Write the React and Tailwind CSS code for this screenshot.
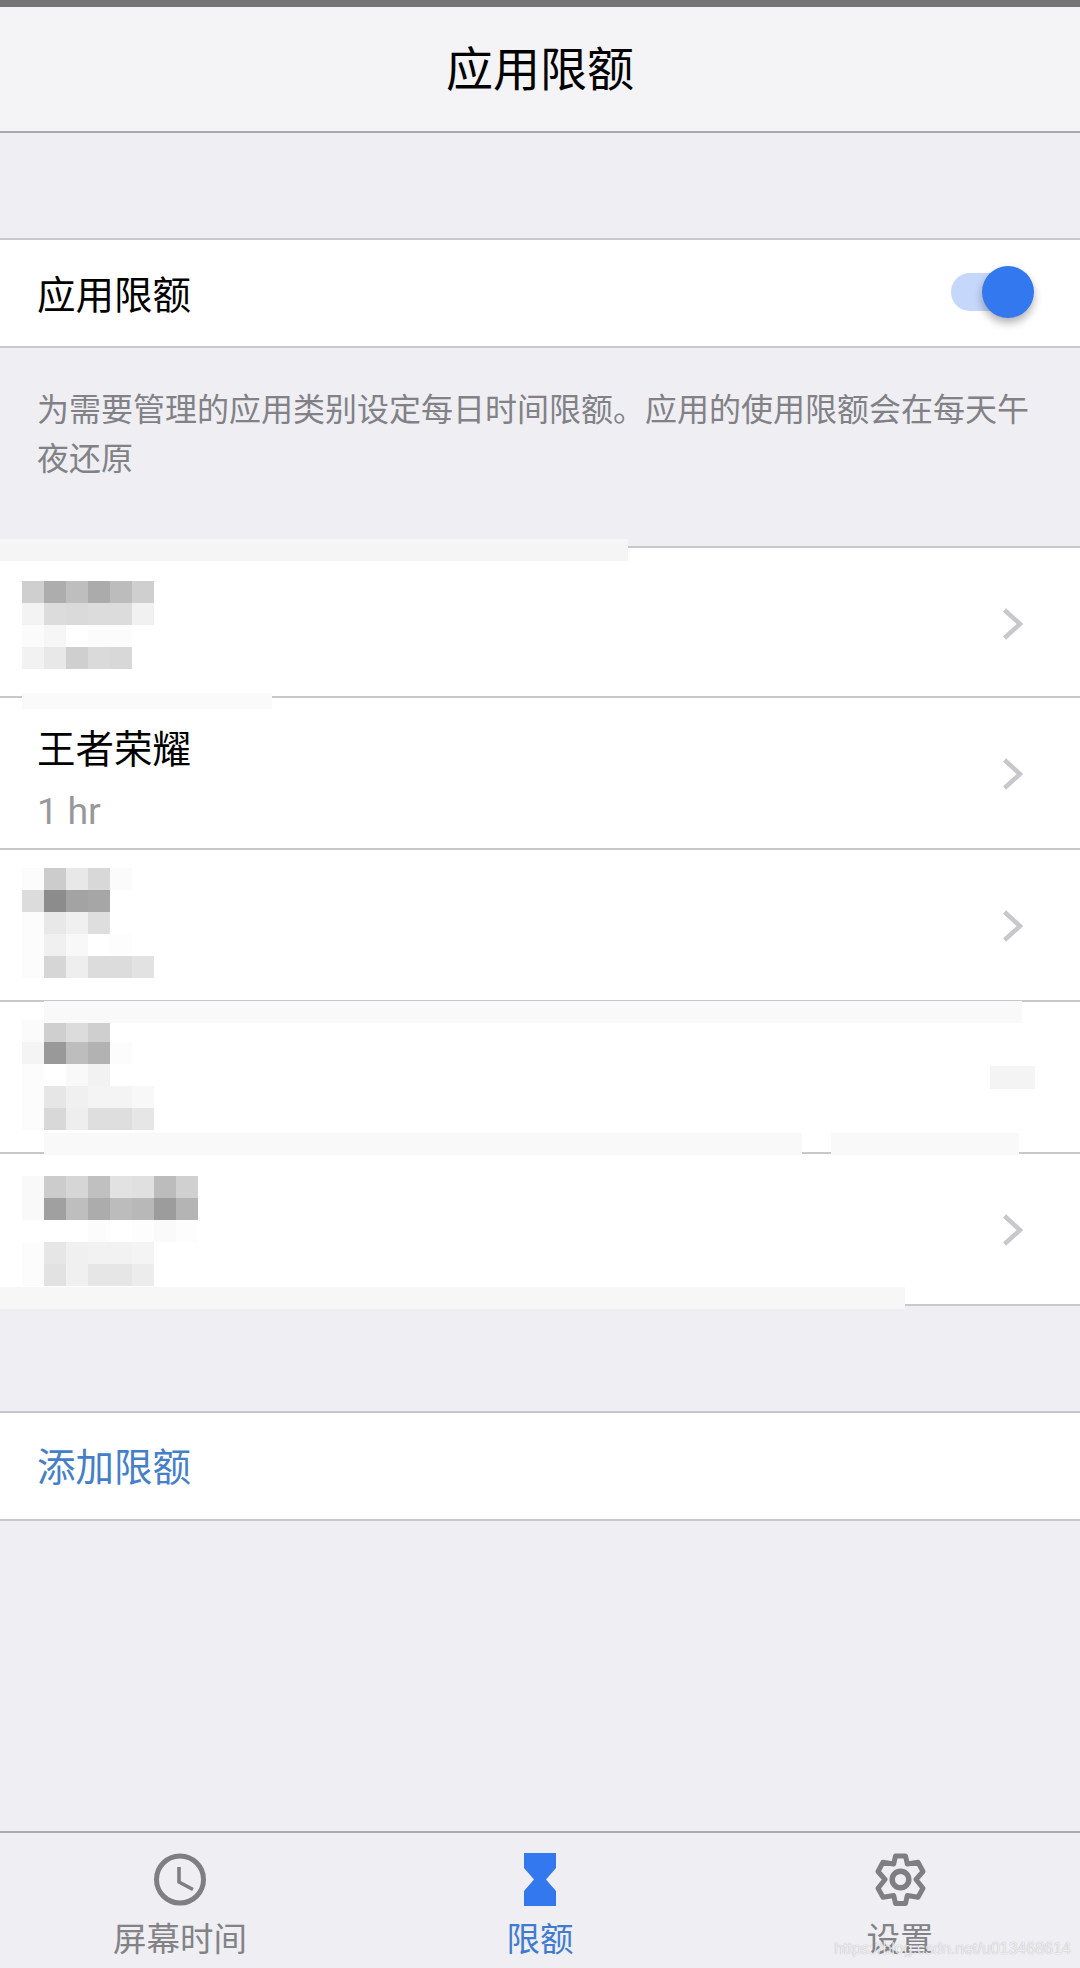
const cjk = "font-['Noto_Sans_CJK_SC','Liberation_Sans',sans-serif]";

const Mosaic = ({ cells }) => (
  <div className="flex flex-col">
    {cells.map((line, i) => (
      <div key={i} className="flex h-[22px]">
        {line.map((c, j) => (
          <div key={j} className={`h-[22px] w-[22px] ${c}`} />
        ))}
      </div>
    ))}
  </div>
);

const Chevron = () => (
  <svg width="20" height="32" viewBox="0 0 20 32" className="shrink-0">
    <path d="M1.5 2 L17 16 L1.5 30" fill="none" stroke="#c7c7cc" strokeWidth="4.5" />
  </svg>
);

const ClockIcon = () => (
  <svg width="52" height="53" viewBox="0 0 52 53">
    <circle cx="26" cy="26.5" r="23.5" fill="none" stroke="#7f7f83" strokeWidth="5" />
    <path d="M25 14 V29 L39 36.5" fill="none" stroke="#7f7f83" strokeWidth="3.6" />
  </svg>
);

const HourglassIcon = () => (
  <svg width="32" height="53" viewBox="0 0 32 53">
    <path d="M0 0 H32 V15 L22 26.5 L32 38 V53 H0 V38 L10 26.5 L0 15 Z" fill="#3478ef" />
  </svg>
);

const GearIcon = () => (
  <svg width="51" height="53" viewBox="0 0 51 52" fill="none" stroke="#7f7f83" strokeWidth="5" strokeLinejoin="round">
    <path d="M20.5 2.5 H30.5 L32.3 10.5 L43 8.8 L48 18 L41 26 L48 34.8 L43 43.7 L32.3 42 L30.5 50 H20.5 L18.7 42 L8 43.7 L3 34.8 L10 26 L3 18 L8 8.8 L18.7 10.5 Z" />
    <circle cx="25.5" cy="26" r="8.3" strokeWidth="5.5" />
  </svg>
);

const row1 = [
  ["bg-[#cfcfcf]", "bg-[#adadad]", "bg-[#bebebe]", "bg-[#ababab]", "bg-[#bcbcbc]", "bg-[#cfcfcf]"],
  ["bg-[#f3f3f3]", "bg-[#dcdcdc]", "bg-[#dadada]", "bg-[#dcdcdc]", "bg-[#dcdcdc]", "bg-[#f1f1f1]"],
  ["bg-[#fbfbfb]", "bg-[#f6f6f6]", "bg-white", "bg-[#fcfcfc]", "bg-[#fcfcfc]", "bg-white"],
  ["bg-[#f2f2f2]", "bg-[#e8e8e8]", "bg-[#cfcfcf]", "bg-[#dadada]", "bg-[#d8d8d8]", "bg-white"],
];

const row3 = [
  ["bg-[#fcfcfc]", "bg-[#cccccc]", "bg-[#e8e8e8]", "bg-[#d8d8d8]", "bg-[#fbfbfb]", "bg-white", "bg-white"],
  ["bg-[#dcdcdc]", "bg-[#8c8c8c]", "bg-[#a3a3a3]", "bg-[#a6a6a6]", "bg-white", "bg-white", "bg-white"],
  ["bg-[#fcfcfc]", "bg-[#e8e8e8]", "bg-[#f0f0f0]", "bg-[#dedede]", "bg-white", "bg-white", "bg-white"],
  ["bg-[#fcfcfc]", "bg-[#f0f0f0]", "bg-[#f8f8f8]", "bg-white", "bg-[#fdfdfd]", "bg-white", "bg-white"],
  ["bg-[#fcfcfc]", "bg-[#d6d6d6]", "bg-[#eeeeee]", "bg-[#dcdcdc]", "bg-[#dcdcdc]", "bg-[#e2e2e2]", "bg-white"],
];

const row4 = [
  ["bg-[#fbfbfb]", "bg-[#cfcfcf]", "bg-[#dcdcdc]", "bg-[#cfcfcf]", "bg-white", "bg-white"],
  ["bg-[#f4f4f4]", "bg-[#999999]", "bg-[#bdbdbd]", "bg-[#b2b2b2]", "bg-[#fcfcfc]", "bg-white"],
  ["bg-[#fcfcfc]", "bg-white", "bg-[#f9f9f9]", "bg-[#f2f2f2]", "bg-white", "bg-white"],
  ["bg-[#fcfcfc]", "bg-[#e6e6e6]", "bg-[#f0f0f0]", "bg-[#f4f4f4]", "bg-[#f4f4f4]", "bg-[#f8f8f8]"],
  ["bg-[#fcfcfc]", "bg-[#d8d8d8]", "bg-[#eeeeee]", "bg-[#dedede]", "bg-[#dedede]", "bg-[#e6e6e6]"],
];

const row5 = [
  ["bg-[#f9f9f9]", "bg-[#cccccc]", "bg-[#d6d6d6]", "bg-[#c0c0c0]", "bg-[#e2e2e2]", "bg-[#e0e0e0]", "bg-[#bcbcbc]", "bg-[#d0d0d0]"],
  ["bg-[#f9f9f9]", "bg-[#a0a0a0]", "bg-[#bebebe]", "bg-[#acacac]", "bg-[#bcbcbc]", "bg-[#b8b8b8]", "bg-[#9c9c9c]", "bg-[#b4b4b4]"],
  ["bg-white", "bg-white", "bg-white", "bg-[#fcfcfc]", "bg-white", "bg-[#fdfdfd]", "bg-[#fafafa]", "bg-[#fdfdfd]"],
  ["bg-[#fcfcfc]", "bg-[#e6e6e6]", "bg-[#f0f0f0]", "bg-[#f2f2f2]", "bg-[#f2f2f2]", "bg-[#f4f4f4]", "bg-white", "bg-white"],
  ["bg-[#fcfcfc]", "bg-[#e2e2e2]", "bg-[#f0f0f0]", "bg-[#e6e6e6]", "bg-[#e6e6e6]", "bg-[#ececec]", "bg-white", "bg-white"],
];

const LimitRow = ({ cells, box, hideChevron, children }) => (
  <div className={`relative flex items-start justify-between border-b-2 border-[#c8c8cc] bg-white pl-[22px] ${box}`}>
    {cells ? <Mosaic cells={cells} /> : children}
    {!hideChevron && (
      <div className="absolute right-[57px] top-[60px]">
        <Chevron />
      </div>
    )}
  </div>
);

const Tab = ({ icon, label, active }) => (
  <div className="flex w-[360px] flex-col items-center">
    <div className="flex h-[53px] items-center">{icon}</div>
    <div className={`mt-[8px] text-[33.5px] leading-[46px] ${active ? "text-[#3f7cd0]" : "text-[#838387]"}`}>{label}</div>
  </div>
);

export default function App() {
  return (
    <div className={`relative flex h-[1968px] w-[1080px] flex-col overflow-hidden bg-[#eeeef3] ${cjk}`}>
      <div className="h-[7px] bg-[#757575]" />

      <header className="flex h-[126px] items-center justify-center border-b-2 border-[#a9a9ad] bg-[#f4f4f6] pb-[8px]">
        <h1 className="text-[47px] font-normal leading-none text-black">应用限额</h1>
      </header>

      <section className="mt-[105px] flex h-[110px] items-center justify-between border-y-2 border-[#c8c8cc] bg-white pb-[2px] pl-[37px] pr-[59px]">
        <span className="text-[38.5px] leading-none text-black">应用限额</span>
        <div className="relative h-[38px] w-[70px] rounded-full bg-[#c5d7fa]">
          <div className="absolute -top-[7px] left-[31px] h-[52px] w-[52px] rounded-full bg-[#3478ef] shadow-[0_5px_8px_rgba(0,0,0,0.3)]" />
        </div>
      </section>

      <p className="mt-[35px] w-[1050px] pl-[37px] text-[32px] leading-[49px] text-[#818186]">
        为需要管理的应用类别设定每日时间限额。应用的使用限额会在每天午夜还原
      </p>

      <section className="relative mt-[65px] border-t-2 border-[#c8c8cc]">
        <LimitRow cells={row1} box="h-[150px] pt-[33px]" />
        <LimitRow box="h-[152px]">
          <div className="pl-[15px] pt-[25px]">
            <div className="text-[38.5px] leading-[46px] text-black">王者荣耀</div>
            <div className="mt-[22px] text-[37.5px] leading-[40px] text-[#98989c] font-['Roboto','Liberation_Sans',sans-serif]">1 hr</div>
          </div>
        </LimitRow>
        <LimitRow cells={row3} box="h-[152px] pt-[18px]" />
        <LimitRow cells={row4} box="h-[152px] pt-[18px]" hideChevron />
        <LimitRow cells={row5} box="h-[152px] pt-[22px]" />

        {/* faint smears left by the mosaic over the separators */}
        <div className="absolute left-0 top-[-9px] h-[22px] w-[628px] bg-[#f5f5f6]" />
        <div className="absolute left-[22px] top-[145px] h-[16px] w-[250px] bg-[#fafafa]" />
        <div className="absolute left-[44px] top-[453px] h-[22px] w-[978px] bg-[#f9f9f9]" />
        <div className="absolute left-[44px] top-[585px] h-[22px] w-[758px] bg-[#f9f9f9]" />
        <div className="absolute left-[831px] top-[585px] h-[22px] w-[188px] bg-[#f9f9f9]" />
        <div className="absolute left-0 top-[739px] h-[22px] w-[905px] bg-[#f7f7f8]" />
        <div className="absolute left-[990px] top-[518px] h-[23px] w-[45px] bg-[#f4f4f4]" />
      </section>

      <button className="mt-[105px] flex h-[110px] items-center border-y-2 border-[#c8c8cc] bg-white pb-[3px] pl-[37px] text-left text-[38.5px] leading-none text-[#457fc9]">
        添加限额
      </button>

      <nav className="mt-auto flex h-[137px] border-t-2 border-[#a9a9ad] pt-[20px]">
        <Tab icon={<ClockIcon />} label="屏幕时间" />
        <Tab icon={<HourglassIcon />} label="限额" active />
        <Tab icon={<GearIcon />} label="设置" />
      </nav>

      <span className="absolute bottom-[10px] right-[9px] font-['Liberation_Sans',sans-serif] text-[16px] leading-[18px] text-white/80 [text-shadow:0_0_1px_rgba(0,0,0,0.35)]">
        https://blog.csdn.net/u013468614
      </span>
    </div>
  );
}
